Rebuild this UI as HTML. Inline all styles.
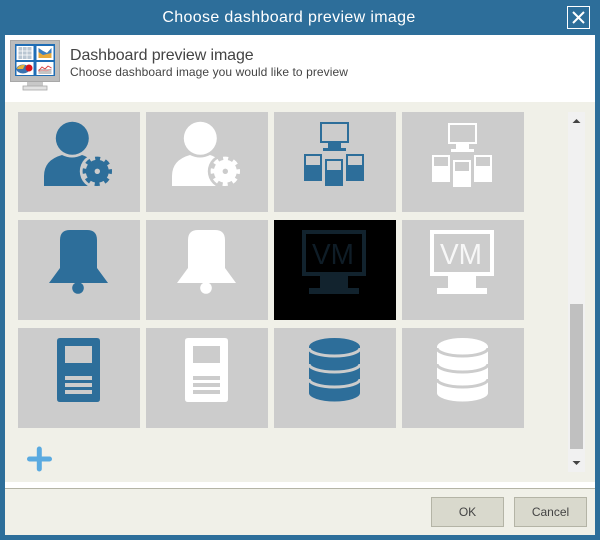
<!DOCTYPE html>
<html><head><meta charset="utf-8">
<style>
html,body{margin:0;padding:0}
body{width:600px;height:540px;position:relative;overflow:hidden;background:#2d6e9a;font-family:"Liberation Sans",sans-serif}
div{position:absolute;box-sizing:border-box}
.t{white-space:nowrap}
.tile{width:122px;height:100px;background:#ccc}
.btn{top:497px;width:73px;height:30px;background:#d9d9cd;border:1px solid #b4b4a6;color:#444;font-size:12px;line-height:28px;text-align:center}
svg{position:absolute;left:0;top:0;overflow:visible}
</style></head><body>
<div class="t" style="left:0;top:8px;width:578px;text-align:center;color:#fff;font-size:16px;line-height:20px;letter-spacing:.35px">Choose dashboard preview image</div>
<div style="left:567px;top:6px;width:23px;height:23px;border:1px solid #fff"></div>
<div style="left:5px;top:35px;width:590px;height:67px;background:#fff"></div>
<div style="left:5px;top:102px;width:590px;height:380px;background:#f0f0e8"></div>
<div style="left:5px;top:482px;width:590px;height:6px;background:#fff"></div>
<div style="left:5px;top:488px;width:590px;height:1px;background:#b4b4a6"></div>
<div style="left:5px;top:489px;width:590px;height:46px;background:#f0f0e8"></div>
<div class="t" style="left:70px;top:46px;font-size:16px;line-height:20px;color:#444;letter-spacing:-.1px">Dashboard preview image</div>
<div class="t" style="left:70px;top:65px;font-size:12px;line-height:14px;color:#444;letter-spacing:.08px">Choose dashboard image you would like to preview</div>

<div class="tile" style="left:18px;top:112px"></div><div class="tile" style="left:146px;top:112px"></div><div class="tile" style="left:274px;top:112px"></div><div class="tile" style="left:402px;top:112px"></div>
<div class="tile" style="left:18px;top:220px"></div><div class="tile" style="left:146px;top:220px"></div><div class="tile" style="left:274px;top:220px;background:#000"></div><div class="tile" style="left:402px;top:220px"></div>
<div class="tile" style="left:18px;top:328px"></div><div class="tile" style="left:146px;top:328px"></div><div class="tile" style="left:274px;top:328px"></div><div class="tile" style="left:402px;top:328px"></div>

<div style="left:568px;top:112px;width:17px;height:360px;background:#f1f1f1"></div>
<div style="left:570px;top:304px;width:13px;height:145px;background:#c0c0c0"></div>
<div class="btn" style="left:431px">OK</div>
<div class="btn" style="left:514px">Cancel</div>

<svg width="600" height="540" viewBox="0 0 600 540">
<defs>
<g id="user">
<circle cx="54.3" cy="26.3" r="16.5"/>
<path d="M26 74V64Q26 48 44 43Q54 48 64 43Q74 46 82 58V74Z"/>
<circle cx="79.3" cy="59.3" r="17.5" fill="#ccc"/>
<circle cx="79.3" cy="59.3" r="11.5"/>
<circle cx="79.3" cy="59.3" r="12.7" fill="none" stroke="currentColor" stroke-width="4" stroke-dasharray="5 4.97" stroke-dashoffset="2.5"/>
<circle cx="79.3" cy="59.3" r="2.7" fill="#ccc"/>
</g>
<g id="net">
<path fill-rule="evenodd" d="M46 10H75V31H67V36H72V39H49V36H54V31H46ZM48 12V29H73V12Z"/>
<path fill-rule="evenodd" d="M30 42H48V69H30ZM32 44V53H46V44Z"/>
<path fill-rule="evenodd" d="M51 47H69V74H51ZM53 49V58H67V49Z"/>
<path fill-rule="evenodd" d="M72 42H90V69H72ZM74 44V53H88V44Z"/>
</g>
<g id="bell">
<path d="M42 20Q42 10 52 10H69Q79 10 79 20V48L90 63H31L42 48Z"/>
<circle cx="60" cy="68" r="5.8"/>
</g>
<g id="vm">
<path fill-rule="evenodd" d="M28 10H92V56H74V68H85V74H35V68H46V56H28ZM32 14V52H88V14Z"/>
<text x="38" y="44" font-size="29" textLength="42" lengthAdjust="spacingAndGlyphs" font-family="Liberation Sans, sans-serif" opacity=".85">VM</text>
</g>
<g id="doc">
<path fill-rule="evenodd" d="M42 10H79Q82 10 82 13V71Q82 74 79 74H42Q39 74 39 71V13Q39 10 42 10ZM47 18V35H74V18ZM47 48V52H74V48ZM47 55V59H74V55ZM47 62V66H74V62Z"/>
</g>
<g id="db">
<path d="M35 19A25.5 9 0 0 1 86 19V65A25.5 8.5 0 0 1 35 65Z"/>
<g fill="none" stroke="#ccc" stroke-width="3">
<path d="M35 20A25.5 8 0 0 0 86 20"/>
<path d="M35 36A25.5 8 0 0 0 86 36"/>
<path d="M35 51A25.5 8 0 0 0 86 51"/>
</g>
</g>
</defs>

<g fill="#2d6e9a" color="#2d6e9a">
<use href="#user" x="18" y="112"/>
<use href="#net" x="274" y="112"/>
<use href="#bell" x="18" y="220"/>
<use href="#doc" x="18" y="328"/>
<use href="#db" x="274" y="328"/>
</g>
<g fill="#fff" color="#fff">
<use href="#user" x="146" y="112"/>
<use href="#net" x="402" y="113"/>
<use href="#bell" x="146" y="220"/>
<use href="#vm" x="402" y="220"/>
<use href="#doc" x="146" y="328"/>
<use href="#db" x="402" y="328"/>
</g>
<use href="#vm" x="274" y="220" fill="#12232e"/>

<!-- close X -->
<path d="M573 12L584 23M584 12L573 23" stroke="#fff" stroke-width="2" fill="none"/>

<!-- plus -->
<path d="M29.5 459H49.5M39.3 449V469" stroke="#5aaae0" stroke-width="5" stroke-linecap="round" fill="none"/>

<!-- scroll arrows -->
<path d="M572.500 123L576.500 119L580.500 123Z" fill="#444"/>
<path d="M572.500 461H580.500L576.500 465Z" fill="#444"/>

<!-- header icon -->
<rect x="10" y="40" width="50" height="42" fill="#a8a8a8"/>
<rect x="11" y="41" width="48" height="40" fill="#bcbcbc"/>
<rect x="15" y="44" width="40" height="32" fill="#1f6db5"/>
<rect x="16.500" y="46" width="17" height="14" fill="#fff"/>
<rect x="36.500" y="46" width="17" height="14" fill="#fff"/>
<rect x="16.500" y="62" width="17" height="13" fill="#fff"/>
<rect x="36.500" y="62" width="17" height="13" fill="#fff"/>
<rect x="18.500" y="47" width="13" height="12" fill="#b9c6d2"/>
<path d="M18.500 51H31.500M18.500 55H31.500M22.500 47V59M27 47V59" stroke="#fff" stroke-width=".7"/>
<path d="M38.500 48L43 51L47 53L51.500 48V58H38.500Z" fill="#e8a93a"/>
<path d="M38.500 48L43 51L47 53L51.500 48V53L47 54L43 55L38.500 52Z" fill="#3a7fc4"/>
<ellipse cx="23" cy="69" rx="6.500" ry="4.500" fill="#3a72b0"/>
<path d="M17 69A6.500 4.500 0 0 1 25 65L23 69Z" fill="#e3b13c"/>
<circle cx="29" cy="68" r="3.500" fill="#d9141c"/>
<rect x="38.500" y="69" width="13" height="5" fill="#c4c4c4"/>
<path d="M38.500 71L42 67L45 69L48 66L51.500 68" stroke="#d83a3a" stroke-width=".9" fill="none"/>
<path d="M38.500 72L42 70L46 71L51.500 69" stroke="#e89090" stroke-width=".7" fill="none"/>
<rect x="27" y="82" width="16" height="5" fill="#c8c8c8"/>
<rect x="23" y="86" width="24" height="4" fill="#e2e2e2" stroke="#a8a8a8" stroke-width=".8"/>
</svg>
</body></html>
